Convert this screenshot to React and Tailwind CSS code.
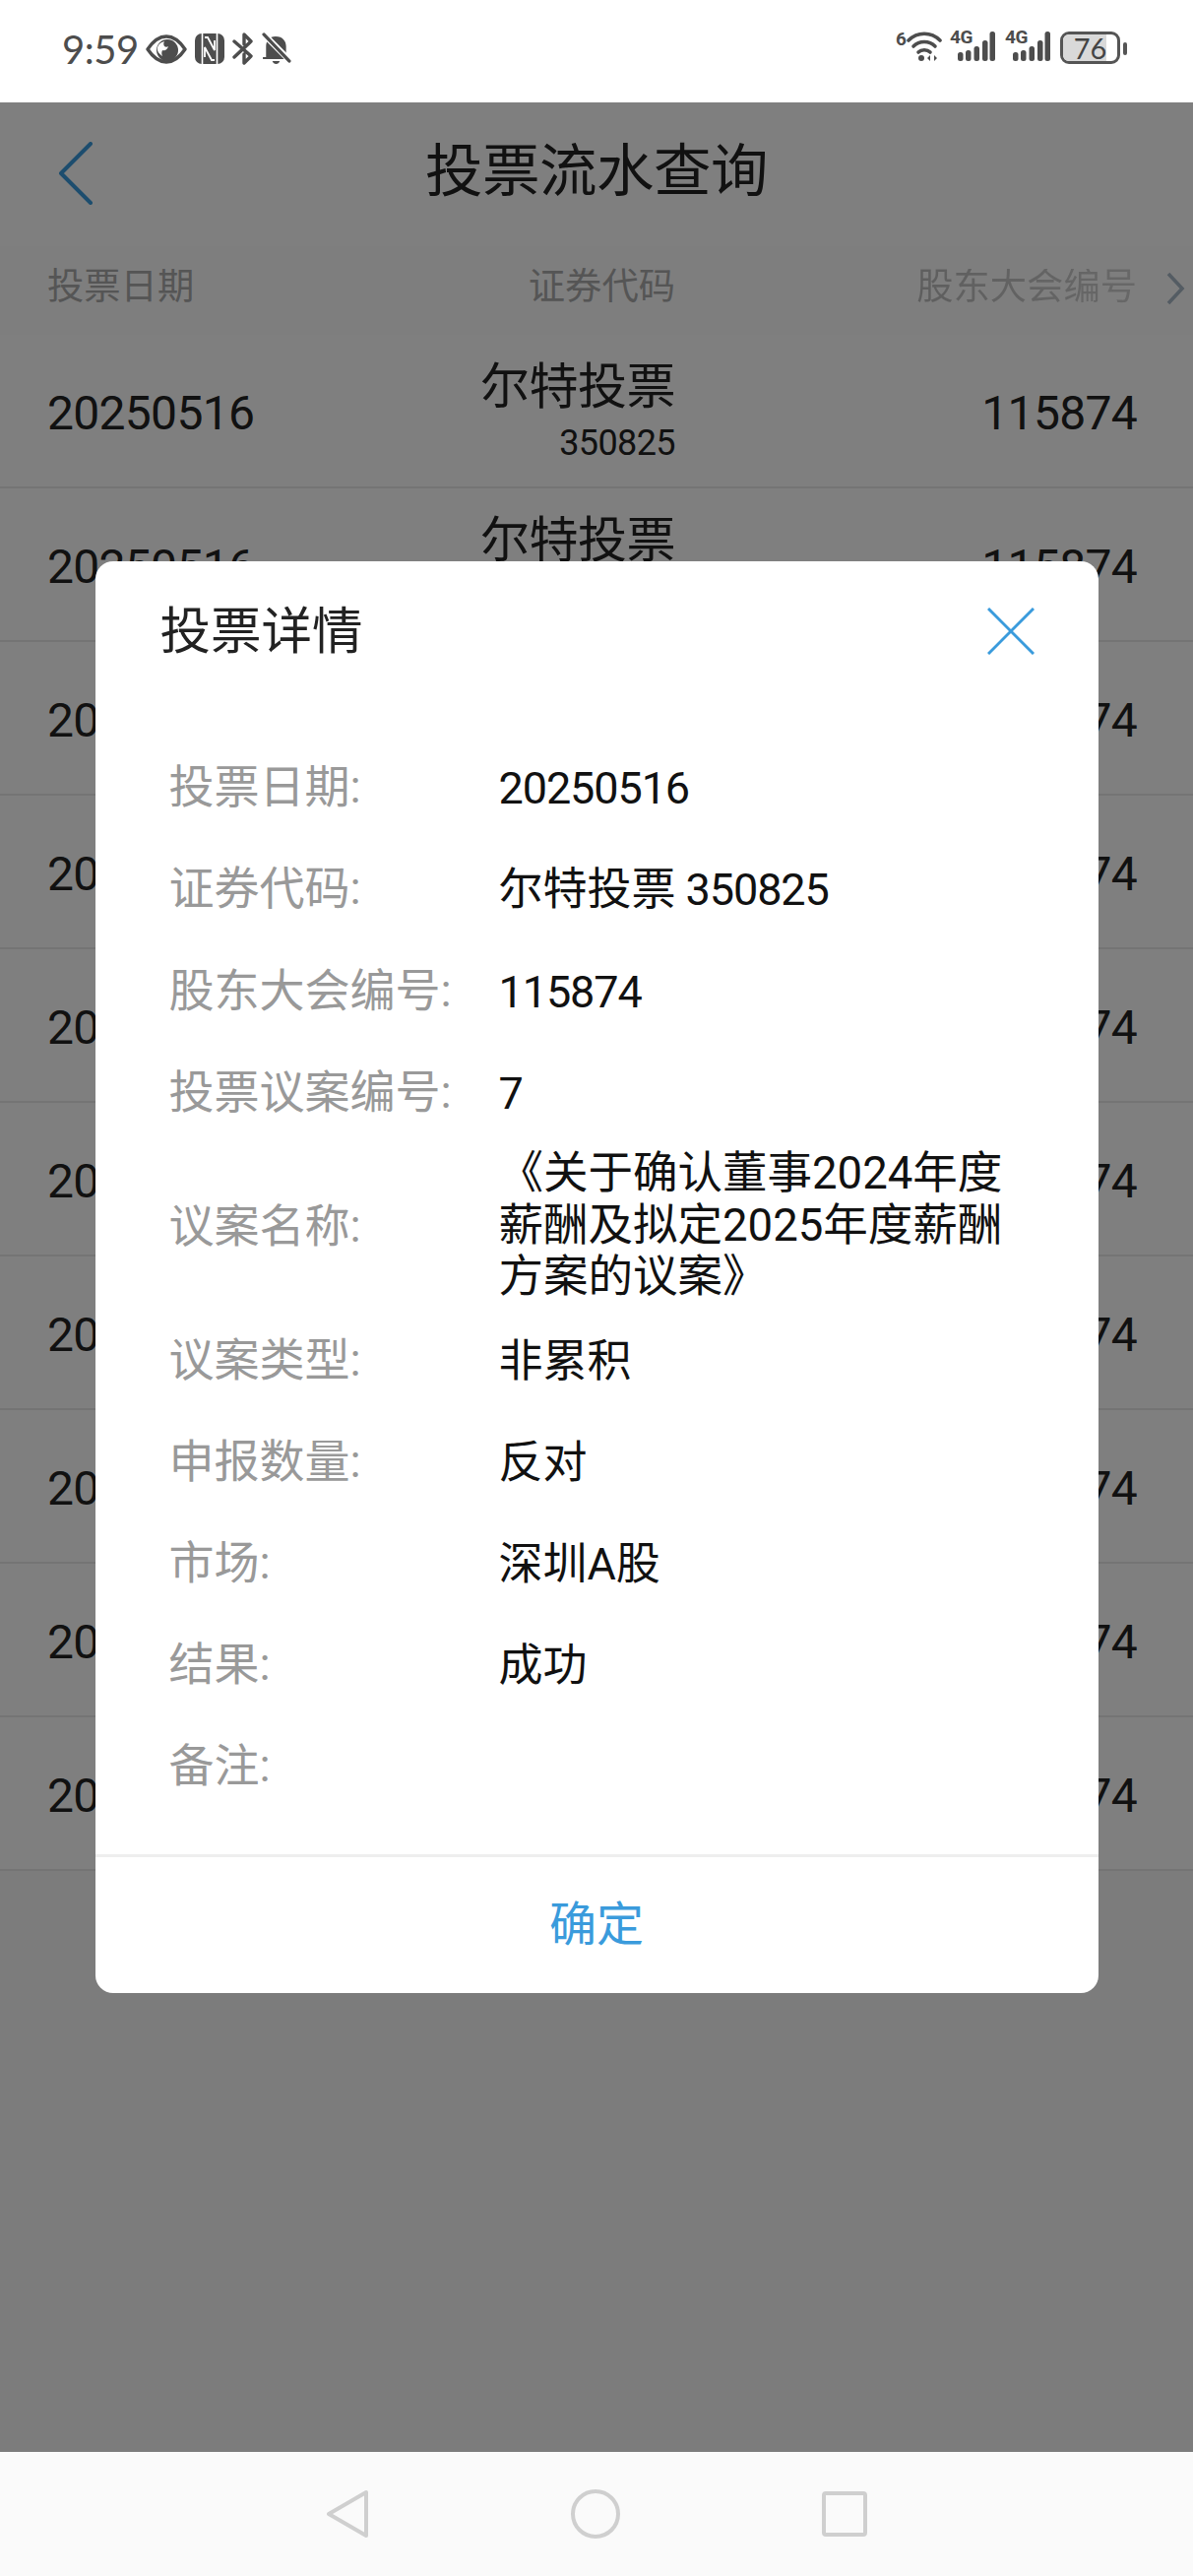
import React from 'react';

const cjk = "font-['Roboto','Noto_Sans_CJK_SC',sans-serif]";

const details = [
    { label: '投票日期:', value: '20250516', digits: true },
    { label: '证券代码:', value: '尔特投票', code: '350825' },
    { label: '股东大会编号:', value: '115874', digits: true },
    { label: '投票议案编号:', value: '7', digits: true },
    { label: '议案名称:', value: '《关于确认董事2024年度薪酬及拟定2025年度薪酬方案的议案》', long: true },
    { label: '议案类型:', value: '非累积', after: true },
    { label: '申报数量:', value: '反对', after: true },
    { label: '市场:', value: '深圳A股', after: true },
    { label: '结果:', value: '成功', after: true },
    { label: '备注:', value: '', after: true },
];

const rows = Array.from({ length: 10 }, (_, i) => i);

const Eye = () => (
    <svg className="mt-[1px]" width="42" height="30" viewBox="0 0 42 30" fill="none">
        <path d="M2 15C8 6 14 2 21 2s13 4 19 13c-6 9-12 13-19 13S8 24 2 15Z" stroke="#4d4d4d" strokeWidth="3.4" strokeLinejoin="round" />
        <circle cx="22" cy="16" r="11" fill="#4d4d4d" />
        <path d="M12 13c1-3 3-5 7-6-1 2-1 3 0 5 1 1 3 1 4 0-1 3-3 5-6 4-1 2-1 4 0 6-3-2-6-5-5-9Z" fill="#fff" />
    </svg>
);

const Nfc = () => (
    <svg width="30" height="31" viewBox="0 0 30 31">
        <rect width="30" height="31" rx="7" fill="#4d4d4d" />
        <path d="M7.500 0v31M22.500 0v31" stroke="#fff" strokeWidth="1.6" />
        <path d="M10 4h3l7 13V7M20 27h-3l-7-13v10" stroke="#fff" strokeWidth="1.8" fill="none" />
    </svg>
);

const BluetoothOff = () => (
    <svg className="mt-[-1px]" width="22" height="33" viewBox="0 0 22 33" fill="none" stroke="#4d4d4d" strokeWidth="3.4" strokeLinecap="round" strokeLinejoin="round">
        <path d="M2 9l17 15-7 7v-9M12 12V2l7 7L2 25" />
    </svg>
);

const BellOff = () => (
    <svg className="mt-[-1px]" width="30" height="33" viewBox="0 0 28 33" preserveAspectRatio="none">
        <path d="M13 4c7 0 10 5 10 10v11h3v2H1v-2h3V14C4 9 7 4 13 4Z" fill="#4d4d4d" />
        <path d="M10 29h7c-.5 2-2 3-3.500 3S10.500 31 10 29Z" fill="#4d4d4d" />
        <path d="M1 1l26 28" stroke="#fff" strokeWidth="6" />
        <path d="M2 2l24 27" stroke="#4d4d4d" strokeWidth="3.200" strokeLinecap="round" />
    </svg>
);

const Wifi = () => (
    <svg width="36" height="30" viewBox="0 0 36 30" fill="none" stroke="#4d4d4d" strokeWidth="3.600" strokeLinecap="round">
        <path d="M2 9C11 0 25 0 34 9" />
        <path d="M7 15c6-6 16-6 22 0" />
        <path d="M12 21c3-3 9-3 12 0" />
        <circle cx="15" cy="27" r="3" fill="#4d4d4d" stroke="none" />
        <path d="M24 24l-3 3 3 3ZM28 24l3 3-3 3Z" fill="#4d4d4d" stroke="none" />
    </svg>
);

const Signal = () => (
    <div className="relative w-[46px] h-[31px]">
        <span className="absolute left-0 top-[-3px] text-[19px] leading-[18px] font-bold text-[#4d4d4d] tracking-[-0.5px]">4G</span>
        <svg className="absolute left-0 top-0" width="46" height="31" viewBox="0 0 46 31" fill="#4d4d4d">
            <rect x="8" y="21" width="5.500" height="9" rx="2.500" />
            <rect x="16" y="19" width="5.500" height="11" rx="2.500" />
            <rect x="24.500" y="15" width="5.500" height="15" rx="2.500" />
            <rect x="33" y="9" width="5.500" height="21" rx="2.500" />
            <rect x="40.500" y="0" width="5.500" height="30" rx="2.500" />
        </svg>
    </div>
);

const StatusBar = () => (
    <div className="h-[104px] bg-white flex items-start pt-[32px] pl-[63px] pr-[67px] text-[#4d4d4d]">
        <span className="w-[75px] font-['Lato',sans-serif] text-[40px] leading-[36px] tracking-[-0.5px]">9:59</span>
        <div className="flex items-start ml-[10px] gap-[8px] pt-[2px]">
            <Eye />
            <Nfc />
            <BluetoothOff />
            <BellOff />
        </div>
        <div className="ml-auto flex items-start">
            <span className="text-[19px] leading-[18px] font-bold mt-[-1px]">6</span>
            <Wifi />
            <div className="flex ml-[8px] gap-[10px]">
                <Signal />
                <Signal />
            </div>
            <div className="relative ml-[10px] w-[61px] h-[33px] border-[3px] border-[#555] rounded-[9px] overflow-hidden">
                <div className="h-full w-[44px] bg-[#d9d9d9]"></div>
                <span className="absolute inset-0 flex items-center justify-center font-['Lato',sans-serif] text-[29px] leading-none text-[#444]">76</span>
            </div>
            <div className="ml-[3px] mt-[11px] w-[4px] h-[13px] rounded-full bg-[#555]"></div>
        </div>
    </div>
);

const ListRow = () => (
    <div className="grid grid-cols-[319px_319px_1fr] items-center h-[156px] pl-[48px] pr-[57px] border-b-2 border-[#e8e8e8] text-[#222]">
        <span className="pt-[5px] text-[48px] tracking-[-0.700px] leading-none">20250516</span>
        <div className="text-right">
            <div className="text-[50px] leading-[58px] tracking-[-0.500px]">尔特投票</div>
            <div className="text-[36px] leading-[42px] mt-[7px] tracking-[-0.600px]">350825</div>
        </div>
        <span className="pt-[5px] text-right text-[48px] tracking-[-0.700px] leading-none">115874</span>
    </div>
);

const Page = () => (
    <div className="h-full bg-[#f8f8f8] flex flex-col">
        <div className="relative h-[146px] bg-white flex items-center justify-center pb-[6px]">
            <svg className="absolute left-[58px] top-[40px]" width="38" height="64" viewBox="0 0 38 64" fill="none" stroke="#3a9bdc" strokeWidth="4" strokeLinecap="round" strokeLinejoin="round">
                <path d="M34 2L4 32l30 30" />
            </svg>
            <h1 className="text-[58.500px] font-normal text-[#222] leading-none tracking-[-0.500px]">投票流水查询</h1>
        </div>
        <div className="relative grid grid-cols-[319px_319px_1fr] items-center h-[90px] pl-[48px] pr-[57px] bg-[#fdfdfd] text-[#aaa] text-[37.300px] leading-none pb-[6px]">
            <span>投票日期</span>
            <span className="text-right">证券代码</span>
            <span className="text-right bg-gradient-to-r from-[#a8a8a8] to-[#d0d0d0] bg-clip-text text-transparent">股东大会编号</span>
            <svg className="absolute left-[1184px] top-[26px]" width="20" height="34" viewBox="0 0 20 34" fill="none" stroke="#a8b8c6" strokeWidth="3.600">
                <path d="M3 2l14 15L3 32" />
            </svg>
        </div>
        <div className="bg-white">
            {rows.map((i) => (
                <ListRow key={i} />
            ))}
        </div>
    </div>
);

const DetailValue = ({ d }) => {
    if (d.long) return <span className="text-[45.500px] leading-[52.500px] text-[#111]">{d.value}</span>;
    if (d.digits) return <span className="pt-[3px] text-[45px] leading-none text-[#111] tracking-[-1.100px]">{d.value}</span>;
    return (
        <span className="pt-[3px] text-[45px] leading-none text-[#111]">
            {d.value}
            {d.code && <span className="tracking-[-1.100px]"> {d.code}</span>}
        </span>
    );
};

const rowClass = (d) => {
    if (d.long) return 'grid grid-cols-[335px_528px] items-center pl-[75px] h-[168px]';
    if (d.after) return 'grid grid-cols-[335px_528px] items-center pl-[75px] h-[103px]';
    return 'grid grid-cols-[335px_528px] items-center pl-[75px] h-[103.500px]';
};

const DetailDialog = () => (
    <div className="w-[1019px] h-[1454px] bg-white rounded-[18px] flex flex-col overflow-hidden">
        <div className="relative h-[140px] shrink-0 pl-[66px] pt-[42px]">
            <h2 className="text-[51.500px] leading-[60px] font-normal text-[#222]">投票详情</h2>
            <svg className="absolute left-[906px] top-[47px]" width="48" height="48" viewBox="0 0 48 48" stroke="#3a9bdc" strokeWidth="3">
                <path d="M1 1l46 46M47 1L1 47" />
            </svg>
        </div>
        <div className="flex-1 pt-[37px]">
            {details.map((d) => (
                <div key={d.label} className={rowClass(d)}>
                    <span className="text-[46px] leading-none text-[#999]">{d.label}</span>
                    <DetailValue d={d} />
                </div>
            ))}
        </div>
        <div className="h-[141px] shrink-0 border-t-[3px] border-[#eeeeee] flex items-center justify-center">
            <span className="text-[48px] leading-none text-[#3a9bdc]">确定</span>
        </div>
    </div>
);

const NavBar = () => (
    <div className="h-[126px] bg-[#fafafa] flex items-center justify-center gap-[205px]">
        <svg width="44" height="50" viewBox="0 0 44 50" fill="none" stroke="#cfcfcf" strokeWidth="4" strokeLinejoin="round">
            <path d="M41 3v44L3 25Z" />
        </svg>
        <svg width="50" height="50" viewBox="0 0 50 50" fill="none" stroke="#cfcfcf" strokeWidth="4">
            <circle cx="25" cy="25" r="23" />
        </svg>
        <svg width="46" height="46" viewBox="0 0 46 46" fill="none" stroke="#cfcfcf" strokeWidth="4" strokeLinejoin="round">
            <rect x="2" y="2" width="42" height="42" rx="2" />
        </svg>
    </div>
);

export default function App() {
    return (
        <div className={`w-[1212px] h-[2616px] flex flex-col bg-white overflow-hidden ${cjk}`}>
            <StatusBar />
            <div className="relative flex-1 min-h-0">
                <Page />
                <div className="absolute inset-0 bg-black/50 flex items-center justify-center">
                    <DetailDialog />
                </div>
            </div>
            <NavBar />
        </div>
    );
}
